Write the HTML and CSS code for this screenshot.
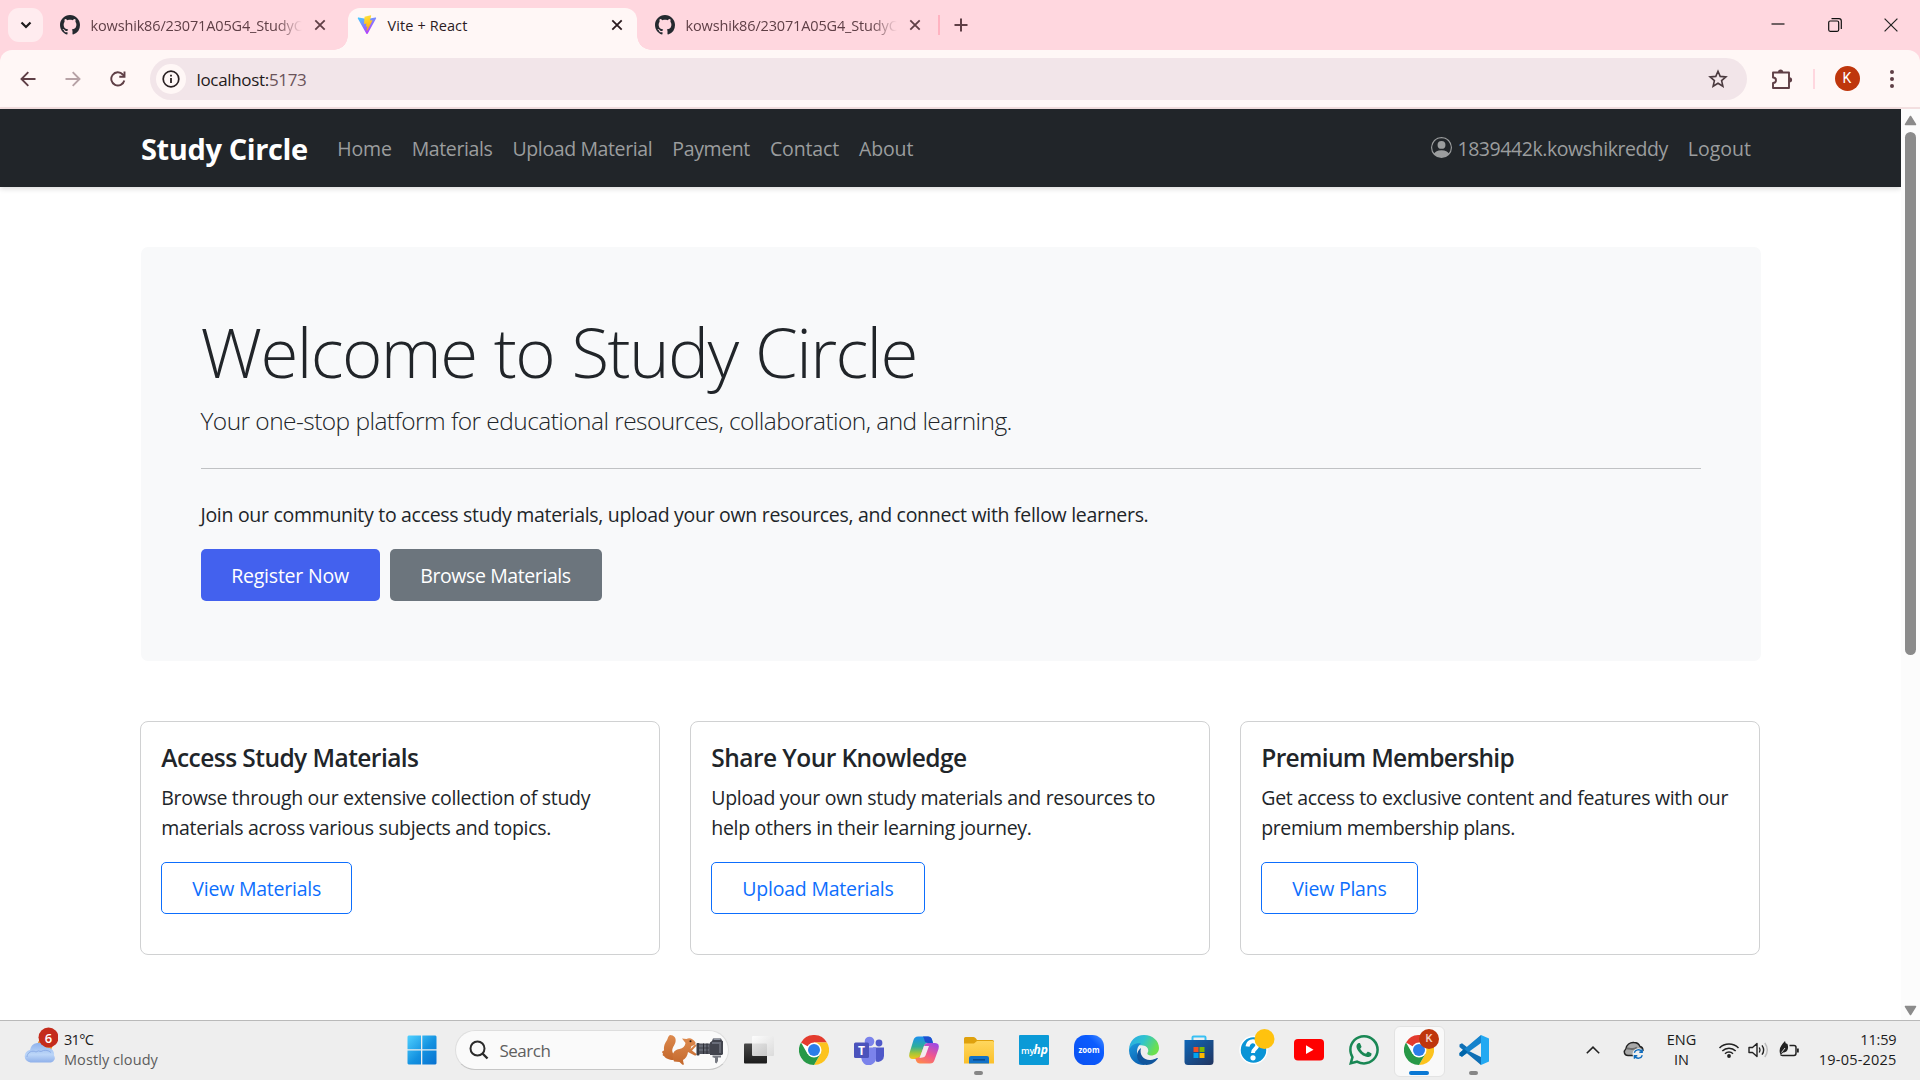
FILE: index.html
```html
<!DOCTYPE html>
<html lang="en">
<head>
<meta charset="utf-8">
<title>Vite + React</title>
<link rel="stylesheet" href="styles.css">
</head>
<body>
<svg class="defs" width="0" height="0">
  <defs>
    <linearGradient id="win" x1="0" y1="0" x2="1" y2="1"><stop offset="0" stop-color="#4fd0ff"/><stop offset=".55" stop-color="#1391e0"/><stop offset="1" stop-color="#0871d0"/></linearGradient>
    <linearGradient id="viteA" x1="0" y1="0" x2=".6" y2="1"><stop offset="0" stop-color="#41d1ff"/><stop offset="1" stop-color="#bd34fe"/></linearGradient>
    <linearGradient id="viteB" x1=".4" y1="0" x2=".6" y2="1"><stop offset="0" stop-color="#ffea83"/><stop offset=".1" stop-color="#ffdd35"/><stop offset="1" stop-color="#ffa800"/></linearGradient>
    <linearGradient id="cloud" x1="0" y1="0" x2="0" y2="1"><stop offset="0" stop-color="#8fb2ec"/><stop offset=".6" stop-color="#bcd6f8"/><stop offset="1" stop-color="#8fb0ea"/></linearGradient>
    <linearGradient id="folder" x1="0" y1="0" x2="0" y2="1"><stop offset="0" stop-color="#ffd75e"/><stop offset="1" stop-color="#fbc02b"/></linearGradient>
    <linearGradient id="copA" x1="0" y1="0" x2="0" y2="1"><stop offset="0" stop-color="#1b8ff0"/><stop offset=".45" stop-color="#2fae9a"/><stop offset=".75" stop-color="#a5c637"/><stop offset="1" stop-color="#f2c51c"/></linearGradient>
    <linearGradient id="copB" x1=".7" y1="0" x2=".2" y2="1"><stop offset="0" stop-color="#a24be0"/><stop offset=".5" stop-color="#f0568f"/><stop offset="1" stop-color="#ff8a4a"/></linearGradient>
    <linearGradient id="edgeTop" x1="0" y1="0" x2="1" y2=".4"><stop offset="0" stop-color="#2aa6e8"/><stop offset=".5" stop-color="#2fc3cf"/><stop offset="1" stop-color="#6be04f"/></linearGradient>
    <linearGradient id="edgeLow" x1="0" y1="0" x2=".4" y2="1"><stop offset="0" stop-color="#1d98dc"/><stop offset="1" stop-color="#0b64b4"/></linearGradient>
    <linearGradient id="store" x1="0" y1="0" x2="1" y2="1"><stop offset="0" stop-color="#0f67b8"/><stop offset="1" stop-color="#21345f"/></linearGradient>
    <linearGradient id="zoomBg" x1="1" y1="0" x2="0" y2="1"><stop offset="0" stop-color="#4a90ff"/><stop offset=".3" stop-color="#0b5cff"/><stop offset="1" stop-color="#0b50f0"/></linearGradient>
    <linearGradient id="dark" x1="0" y1="0" x2="0" y2="1"><stop offset="0" stop-color="#4a4a4a"/><stop offset="1" stop-color="#1b1b1b"/></linearGradient>
    <linearGradient id="lite" x1="0" y1="0" x2="1" y2="1"><stop offset="0" stop-color="#ffffff"/><stop offset="1" stop-color="#d8d8d8"/></linearGradient>
    <linearGradient id="fur" x1="0" y1="0" x2="0" y2="1"><stop offset="0" stop-color="#dd8a4e"/><stop offset="1" stop-color="#c4682c"/></linearGradient>
    <symbol id="github" viewBox="0 0 16 16"><path d="M8 0C3.58 0 0 3.58 0 8c0 3.54 2.29 6.53 5.47 7.59.4.07.55-.17.55-.38 0-.19-.01-.82-.01-1.49-2.01.37-2.53-.49-2.69-.94-.09-.23-.48-.94-.82-1.13-.28-.15-.68-.52-.01-.53.63-.01 1.08.58 1.23.82.72 1.21 1.87.87 2.33.66.07-.52.28-.87.51-1.07-1.78-.2-3.64-.89-3.64-3.95 0-.87.31-1.59.82-2.15-.08-.2-.36-1.02.08-2.12 0 0 .67-.21 2.2.82.64-.18 1.32-.27 2-.27s1.36.09 2 .27c1.53-1.04 2.2-.82 2.2-.82.44 1.1.16 1.92.08 2.12.51.56.82 1.27.82 2.15 0 3.07-1.87 3.75-3.65 3.95.29.25.54.73.54 1.48 0 1.07-.01 1.93-.01 2.2 0 .21.15.46.55.38A8.01 8.01 0 0 0 16 8c0-4.42-3.58-8-8-8z"/></symbol>
    <symbol id="close" viewBox="0 0 12 12"><path d="M1.3 1.3l9.4 9.4M10.7 1.3L1.3 10.7" fill="none" stroke="currentColor" stroke-width="1.8"/></symbol>
    <symbol id="chrome" viewBox="0 0 30 30"><circle cx="15" cy="15" r="15" fill="#fff"/><path d="M15 15L2 7.5A15 15 0 0 1 28 7.5H15z" fill="#e33b2e"/><path d="M15 7.5H28A15 15 0 0 1 15 30L21.5 18.8z" fill="#fcc31e"/><path d="M2 7.5A15 15 0 0 0 15 30L21.5 18.75 15 15 8.5 18.75z" fill="#279847"/><circle cx="15" cy="15" r="7.5" fill="#fff"/><circle cx="15" cy="15" r="6" fill="#2b7de9"/></symbol>
  </defs>
</svg>

<header class="tabstrip">
  <button class="tab-search"><svg width="12" height="8" viewBox="0 0 12 8"><path d="M1.5 1.500L6 6l4.500-4.500" fill="none" stroke="#1f1a1b" stroke-width="2.200"/></svg></button>
  <div class="tab tab-first">
    <svg class="favicon" width="20" height="20"><use href="#github"/></svg>
    <span class="tab-title fade">kowshik86/23071A05G4_StudyC</span>
    <svg class="tab-close" width="12" height="12"><use href="#close"/></svg>
  </div>
  <div class="tab tab-active">
    <svg class="favicon" width="20" height="20" viewBox="0 0 32 32"><path d="M30.500 5.500L17 29.800a1.200 1.200 0 0 1-2 0L1.300 5.500a1.200 1.200 0 0 1 1.200-1.700L16 6.200l13.300-2.400a1.200 1.200 0 0 1 1.200 1.700z" fill="url(#viteA)"/><path d="M22 .3L12.500 2.200a.6.6 0 0 0-.5.500l-.7 11a.6.6 0 0 0 .8.600l3-.7-.9 4.300a.6.6 0 0 0 .8.700l1.800-.5-1.400 6.700c-.1.500.5.700.8.300L24.500 9a.6.6 0 0 0-.6-.8l-3.200.6 2-8z" fill="url(#viteB)"/></svg>
    <span class="tab-title">Vite + React</span>
    <svg class="tab-close" width="12" height="12"><use href="#close"/></svg>
  </div>
  <div class="tab tab-last">
    <svg class="favicon" width="20" height="20"><use href="#github"/></svg>
    <span class="tab-title fade">kowshik86/23071A05G4_StudyC</span>
    <svg class="tab-close" width="12" height="12"><use href="#close"/></svg>
  </div>
  <i class="tab-sep"></i>
  <svg class="new-tab" width="14" height="14" viewBox="0 0 14 14"><path d="M7 .5v13M.5 7h13" stroke="#5f3f46" stroke-width="2"/></svg>
  <div class="window-controls">
    <svg width="14" height="14" viewBox="0 0 14 14"><path d="M.5 6h13" stroke="#111" stroke-width="1.200"/></svg>
    <svg width="14" height="14" viewBox="0 0 14 14"><rect x=".7" y="3" width="10" height="10.300" rx="1.500" fill="none" stroke="#111" stroke-width="1.200"/><path d="M3.500.7H11q2.300 0 2.300 2.300v8" fill="none" stroke="#111" stroke-width="1.200"/></svg>
    <svg width="14" height="14" viewBox="0 0 14 14"><path d="M.6.6l12.800 12.800M13.400.6L.6 13.400" stroke="#222" stroke-width="1.200"/></svg>
  </div>
</header>

<div class="toolbar">
  <div class="nav-buttons">
    <svg width="16" height="16" viewBox="0 0 16 16"><path d="M15.500 8H1.800M8.300 1.200L1.500 8l6.800 6.800" fill="none" stroke="#5f3f46" stroke-width="1.900"/></svg>
    <svg width="16" height="16" viewBox="0 0 16 16"><path d="M.5 8h13.700M7.700 1.200L14.500 8l-6.800 6.800" fill="none" stroke="#b7a2a6" stroke-width="1.900"/></svg>
    <svg width="16" height="16" viewBox="0 0 16 16"><path d="M14.300 9.500A6.600 6.600 0 1 1 12.800 3.500L14.300 5" fill="none" stroke="#5f3f46" stroke-width="1.900"/><path d="M14.500.5v5.200H9.300" fill="none" stroke="#5f3f46" stroke-width="1.900"/></svg>
  </div>
  <div class="omnibox">
    <span class="site-info"><svg width="18" height="18" viewBox="0 0 18 18"><circle cx="9" cy="9" r="7.800" fill="none" stroke="#2a2022" stroke-width="1.700"/><path d="M9 8v5M9 4.700v1.900" stroke="#2a2022" stroke-width="1.800"/></svg></span>
    <span class="url">localhost:<em>5173</em></span>
    <svg class="star" width="20" height="20" viewBox="0 0 20 20"><path d="M10 2.200l2.200 5.200 5.700.5-4.300 3.700 1.300 5.600L10 14.200l-4.900 3 1.300-5.600L2.100 7.900l5.700-.5z" fill="none" stroke="#4b3a3f" stroke-width="1.600"/></svg>
  </div>
  <svg class="extension" width="22" height="22" viewBox="0 0 22 22"><path d="M3.500 4.500h14.500v15.500h-16v-5c4 0 4-5.500 0-5.500v-5z" fill="none" stroke="#5f3f46" stroke-width="1.900" stroke-linejoin="round"/><path d="M7 4a2.600 2.600 0 0 1 5.200 0zM18.500 9.200a2.600 2.600 0 0 1 0 5.200z" fill="#5f3f46"/></svg>
  <i class="bar-sep"></i>
  <span class="profile">K</span>
  <svg class="menu" width="6" height="20" viewBox="0 0 6 20"><circle cx="3" cy="3" r="2" fill="#5f3f46"/><circle cx="3" cy="10" r="2" fill="#5f3f46"/><circle cx="3" cy="17" r="2" fill="#5f3f46"/></svg>
</div>

<div class="viewport">
  <div class="page">
    <nav class="navbar">
      <a class="brand">Study Circle</a>
      <a class="link-home">Home</a>
      <a>Materials</a>
      <a>Upload Material</a>
      <a>Payment</a>
      <a class="link-wide">Contact</a>
      <a class="link-wide">About</a>
      <span class="account">
        <svg width="21" height="21" viewBox="0 0 16 16" fill="currentColor"><path d="M11 6a3 3 0 1 1-6 0 3 3 0 0 1 6 0"/><path fill-rule="evenodd" d="M0 8a8 8 0 1 1 16 0A8 8 0 0 1 0 8m8-7a7 7 0 0 0-5.468 11.370C3.242 11.226 4.805 10 8 10s4.757 1.225 5.468 2.370A7 7 0 0 0 8 1"/></svg>
        <a class="user">1839442k.kowshikreddy</a>
        <a class="logout">Logout</a>
      </span>
    </nav>

    <main class="container">
      <section class="hero">
        <h1>Welcome to Study Circle</h1>
        <p class="lead">Your one-stop platform for educational resources, collaboration, and learning.</p>
        <hr>
        <p class="join">Join our community to access study materials, upload your own resources, and connect with fellow learners.</p>
        <div class="actions">
          <a class="btn btn-primary">Register Now</a>
          <a class="btn btn-secondary">Browse Materials</a>
        </div>
      </section>

      <section class="cards">
        <article class="card">
          <h5>Access Study Materials</h5>
          <p>Browse through our extensive collection of study<br>materials across various subjects and topics.</p>
          <a class="btn btn-outline">View Materials</a>
        </article>
        <article class="card">
          <h5>Share Your Knowledge</h5>
          <p>Upload your own study materials and resources to<br>help others in their learning journey.</p>
          <a class="btn btn-outline">Upload Materials</a>
        </article>
        <article class="card">
          <h5 class="tight">Premium Membership</h5>
          <p>Get access to exclusive content and features with our<br><span class="tight-line">premium membership plans.</span></p>
          <a class="btn btn-outline">View Plans</a>
        </article>
      </section>
    </main>
  </div>
  <div class="scrollbar">
    <svg width="13" height="11" viewBox="0 0 13 11"><path d="M6.500 1.500L11.500 9.500h-10z" fill="#8b8b8b" stroke="#8b8b8b" stroke-width="1.500" stroke-linejoin="round"/></svg>
    <i class="thumb"></i>
    <svg class="down" width="13" height="11" viewBox="0 0 13 11"><path d="M6.500 9.500L1.500 1.500h10z" fill="#8b8b8b" stroke="#8b8b8b" stroke-width="1.500" stroke-linejoin="round"/></svg>
  </div>
</div>

<footer class="taskbar">
  <div class="weather">
    <svg width="34" height="38" viewBox="0 0 34 38"><circle cx="21" cy="18" r="7.500" fill="#f08a1c"/><path d="M6.500 35.500a6.300 6.300 0 0 1-.5-12.500 8.500 8.500 0 0 1 16-2.500 7 7 0 0 1 8 8 4.500 4.500 0 0 1-3 7z" fill="url(#cloud)"/><path d="M3 30a6 6 0 0 1 9-5q2-2 5-.5 5-3 10 1" fill="none" stroke="#7e9fdf" stroke-width="1" opacity=".7"/><circle cx="24.500" cy="10.500" r="10" fill="#c42b1c"/><text x="24.500" y="15.500" text-anchor="middle" class="badge-text">6</text></svg>
    <div class="weather-text"><b>31°C</b><span>Mostly cloudy</span></div>
  </div>
  <div class="task"><svg width="30" height="30" viewBox="0 0 30 30"><path d="M1.500.5H14v13.700H.5V1.500zM15.300.5H28.500l1 1v12.700H15.300zM.5 15.500H14v14H1.500l-1-1zM15.300 15.500H29.500v13l-1 1H15.300z" fill="url(#win)"/></svg></div>
  <div class="search">
    <svg width="20" height="20" viewBox="0 0 20 20"><circle cx="8.500" cy="8.500" r="7" fill="none" stroke="#2b2b2b" stroke-width="2"/><path d="M13.500 13.500l5 5" stroke="#2b2b2b" stroke-width="2.400"/></svg>
    <span class="search-label">Search</span>
    <svg class="squirrel" width="64" height="32" viewBox="0 0 64 32">
      <path d="M9 1C13 1 15.500 4 14.500 8c-.8 3.500-4 6-3 10 .5 2.500 2.500 4 3 6l-2 2C8 26 4 24 3 22c-1.500 0-1.500-1.500-1-2.500C.5 18.500 1 17 3 16.500 2.500 9.500 5.500 8 6.500 5 7 3 7.500 2 9 1z" fill="url(#fur)"/>
      <path d="M11.500 23c0-5 3-7.500 7-8 3.500-.5 5.500-3 6-6L21 4.500l4.500.5c3-2 7 0 9 3.500.3 2-1.500 3-4 3.500l-1 3 4.500-4.500c1.200-.3 2 .8 1 1.700L31 16.500l4.500 3.500c.3 1.400-1 1.800-2.300 1.200L27 18c-.5 4-2.500 6.500-5 8l.5 3c1 1.500 0 2.300-1.300 1.600L18.500 28 13 27.500z" fill="url(#fur)"/>
      <circle cx="29.500" cy="7.300" r="1" fill="#2a1a12"/>
      <rect x="35.500" y="9" width="3" height="12.500" rx="1" fill="#383b44"/><path d="M38 9.500h11v10.500H38z" fill="#50535d"/><path d="M38 12h10M38 16h10" stroke="#7b808c" stroke-width="1"/><path d="M42.500 9.500V20M46 9.500V20" stroke="#2d2f37" stroke-width="1"/>
      <path d="M49 8.500l2-1.500 1-2.500h8l1 2 1 .8V20l-1 1H49z" fill="#43454e"/><path d="M52.500 5.300h7M51 9h9" stroke="#9096a3" stroke-width="1.200"/><path d="M59 10v9" stroke="#70747f" stroke-width="1.500"/>
      <path d="M51.500 21.500h8.500v2h-3v3.500l-1.500 2.500-1.500-1V24l-2.500-.7z" fill="#777a82"/>
    </svg>
  </div>
  <div class="task"><svg width="32" height="30" viewBox="0 0 32 30"><rect x="1" y="8.500" width="23" height="20" rx="1" fill="url(#dark)"/><rect x="9" y="1" width="22" height="20" rx="1" fill="url(#lite)" fill-opacity=".88"/></svg></div>
  <div class="task"><svg width="30" height="30"><use href="#chrome"/></svg></div>
  <div class="task"><svg width="32" height="30" viewBox="0 0 32 30"><circle cx="26" cy="8" r="3.400" fill="#5059c9"/><path d="M20 12.500h11v8.500a6 6 0 0 1-8 5.500z" fill="#5059c9"/><circle cx="16.500" cy="6.500" r="4.800" fill="#7b83eb"/><path d="M8 12.500h15v10a7.300 7.300 0 0 1-14.600 1z" fill="#7b83eb"/><rect x="1" y="7.500" width="15" height="15.500" rx="1.500" fill="#4b53bc"/><text x="8.500" y="19.500" text-anchor="middle" class="teams-text">T</text></svg></div>
  <div class="task"><svg width="32" height="30" viewBox="0 0 32 30"><path d="M10 1.500h10q3 0 4 3l1 3.500h-5q-3 0-4 3l-3 9q-1.500 4-5 4H5q-5 0-3.500-6l4-13q1-3.500 4.500-3.500z" fill="url(#copA)"/><path d="M15 1.500h5q3 0 4 3l1 3.500h-5l-3-1q-1-4.500-2-5.500z" fill="#1f4fd0"/><path d="M22 28.500H12q-3 0-4-3l-.8-2.500q4 .5 5.800-3l3-9q1-3 4-3h7q5 0 3.500 6l-4 11q-1 3.500-4.500 3.500z" fill="url(#copB)"/><path d="M16 11h5l-3.500 9.500q-.8 2-3 2l-3 .5z" fill="#f4e9ee"/></svg></div>
  <div class="task"><svg width="30" height="30" viewBox="0 0 30 30"><path d="M0 3.500q0-1.500 1.500-1.500h8q1.500 0 2.500 1.500L13 5h15.500Q30 5 30 6.500V14H0z" fill="#dfa10d"/><path d="M0 8.500h10L13 6h15.500Q30 6 30 7.500v21H0z" fill="url(#folder)"/><path d="M5 28.500V23q0-2 2-2h16q2 0 2 2v5.500z" fill="#1272c8"/><path d="M9 24.800h12" stroke="#0a4a8c" stroke-width="1.500"/></svg><i class="dot"></i></div>
  <div class="task"><svg width="30" height="30" viewBox="0 0 30 30"><rect width="30" height="30" rx="1" fill="#0a9ad7"/><text x="2" y="18.500" class="my-text">my</text><text x="14.500" y="19" class="hp-text">hp</text></svg></div>
  <div class="task"><svg width="30" height="30" viewBox="0 0 30 30"><rect width="30" height="30" rx="11.500" fill="url(#zoomBg)"/><text x="15" y="17.500" text-anchor="middle" class="zoom-text" textLength="21" lengthAdjust="spacingAndGlyphs">zoom</text></svg></div>
  <div class="task"><svg width="30" height="30" viewBox="0 0 30 30"><path d="M.2 17C-1 7 6 0 15 0c9 0 15 6 15 13 0 5-4 7.500-8 7.500-3 0-4-1.500-3.500-2.500 2-3 0-7-4.500-7.500C7 9.500 2 12 .2 17z" fill="url(#edgeTop)"/><path d="M.1 15.500C1.500 10 7 7.500 12 8.500c-3 2-4 5-4 8.500 0 6 4 11 9 12.800C8 31 0 25 .1 15.500z" fill="url(#edgeLow)"/><path d="M12 13c-2 7 3 12.500 9.500 12 2.500-.2 4.500-1 6.500-2 .8-.3 1 .3.700.8C26 27.500 22 30 17.500 30 10 29.500 6 22 9 16.500c.8-1.600 1.800-2.700 3-3.500z" fill="#10559c"/></svg></div>
  <div class="task"><svg width="30" height="30" viewBox="0 0 30 30"><path d="M8.500 6V2.500q0-1 1-1h11q1 0 1 1V6" fill="none" stroke="#38c0f3" stroke-width="2"/><path d="M.5 5h29v21.500q0 3.500-3.500 3.500H4Q.5 30 .5 26.500z" fill="url(#store)"/><path d="M9.500 12H14.500v5H9.500z" fill="#f25022"/><path d="M15.500 12h5v5h-5z" fill="#7fba00"/><path d="M9.500 18H14.500v5H9.500z" fill="#00a4ef"/><path d="M15.500 18h5v5h-5z" fill="#ffb900"/></svg></div>
  <div class="task"><svg class="help" width="36" height="36" viewBox="0 0 36 36"><circle cx="14.500" cy="21" r="13.500" fill="#0a94d6" stroke="#fff" stroke-width="1.500"/><path d="M8.500 17.500c1-5.500 5.500-6 8-4.500 3 2 2 5-.5 7-1.500 1.200-2 2-2 4" fill="none" stroke="#fff" stroke-width="4"/><circle cx="14" cy="28.800" r="2.600" fill="#fff"/><circle cx="25.500" cy="10" r="10" fill="#ffc20e"/></svg></div>
  <div class="task"><svg width="30" height="30" viewBox="0 0 30 30"><rect y="4" width="30" height="21.500" rx="4" fill="#f00"/><path d="M12 10.300v8.800l7.500-4.400z" fill="#fff"/></svg></div>
  <div class="task"><svg width="30" height="30" viewBox="0 0 16 16" fill="#198754"><path d="M13.601 2.326A7.850 7.850 0 0 0 7.994 0C3.627 0 .068 3.558.064 7.926c0 1.399.366 2.760 1.057 3.965L0 16l4.204-1.102a7.900 7.900 0 0 0 3.790.965h.004c4.368 0 7.926-3.558 7.930-7.930A7.900 7.900 0 0 0 13.600 2.326zM7.994 14.521a6.600 6.600 0 0 1-3.356-.92l-.240-.144-2.494.654.666-2.433-.156-.251a6.560 6.560 0 0 1-1.007-3.505c0-3.626 2.957-6.584 6.591-6.584a6.560 6.560 0 0 1 4.660 1.931 6.560 6.560 0 0 1 1.928 4.660c-.004 3.639-2.961 6.592-6.592 6.592m3.615-4.934c-.197-.099-1.170-.578-1.353-.646-.182-.065-.315-.099-.445.099-.133.197-.513.646-.627.775-.114.133-.232.148-.430.050-.197-.100-.836-.308-1.592-.985-.590-.525-.985-1.175-1.103-1.372-.114-.198-.011-.304.088-.403.087-.088.197-.232.296-.346.100-.114.133-.198.198-.330.065-.134.034-.248-.015-.347-.050-.099-.445-1.076-.612-1.470-.160-.389-.323-.335-.445-.340-.114-.007-.247-.007-.380-.007a.730.730 0 0 0-.529.247c-.182.198-.691.677-.691 1.654s.710 1.916.810 2.049c.098.133 1.394 2.132 3.383 2.992.470.205.840.326 1.129.418.475.152.904.129 1.246.080.380-.058 1.171-.480 1.338-.943.164-.464.164-.860.114-.943-.049-.084-.182-.133-.380-.232"/></svg></div>
  <div class="task task-active"><svg width="30" height="30"><use href="#chrome"/></svg><b class="k-badge">K</b><i class="dot dot-active"></i></div>
  <div class="task"><svg width="30" height="30" viewBox="0 0 30 30"><path d="M22 0L8.500 12.500 3 8.300 .5 9.600V12L22 30V22L8 15z" fill="#0f6fb5"/><path d="M22 0v8L3 21.700.5 20.400V18L22 0z" fill="#1583cc"/><path d="M3 21.700L.5 20.400V18L5 14l4 3z" fill="#0065a9"/><path d="M22 0l8 3.500v23L22 30z" fill="#23a9f2"/></svg><i class="dot"></i></div>
  <div class="tray">
    <svg class="chev" width="14" height="8" viewBox="0 0 14 8"><path d="M.8 7.200L7 1.200l6.200 6" fill="none" stroke="#222" stroke-width="1.600"/></svg>
    <svg class="onedrive" width="22" height="20" viewBox="0 0 22 20"><path d="M5 15.500C1 15.500.3 11 2.800 9 3.300 5 7 2 11 2.500c3 0 5 1.500 6 4 2 .5 3 2 3 4l-5 5z" fill="#a8a8a8" stroke="#222" stroke-width="1.400"/><path d="M4 8.500C8 8 9 11 14 7.500" fill="none" stroke="#6d6d6d" stroke-width="2"/><circle cx="15.300" cy="14" r="5.800" fill="#eee"/><path d="M11.300 12.800a4.200 4.200 0 0 1 7.400-1.300M19.300 15.200a4.200 4.200 0 0 1-7.400 1.300M19.200 9.300v2.900h-2.900M11.400 18.700v-2.900h2.900" fill="none" stroke="#0f6cbd" stroke-width="1.400"/></svg>
    <div class="lang"><span>ENG</span><span>IN</span></div>
    <svg class="wifi" width="22" height="18" viewBox="0 0 22 18"><path d="M1.500 7a13.500 13.500 0 0 1 19 0M4.300 10a9.500 9.500 0 0 1 13.400 0M7 12.700a5.700 5.700 0 0 1 8 0" fill="none" stroke="#222" stroke-width="1.500"/><circle cx="11" cy="15" r="1.900" fill="#222"/></svg>
    <svg class="volume" width="21" height="18" viewBox="0 0 21 18"><path d="M1 6.500h3.500L9 2.500v13L4.500 11.500H1z" fill="none" stroke="#222" stroke-width="1.400" stroke-linejoin="round"/><path d="M11.300 6.500q1.500 2.500 0 5M14 4.300q3.300 4.700 0 9.400" fill="none" stroke="#222" stroke-width="1.400"/><path d="M16.800 2q5 7 0 14" fill="none" stroke="#bbb" stroke-width="1.400"/></svg>
    <svg class="battery" width="21" height="18" viewBox="0 0 21 18"><path d="M10.500 4.500H15q2 0 2 2V12q0 2.500-2 2.500H3.500q-1.500 0-2-1" fill="none" stroke="#222" stroke-width="1.500"/><path d="M18 7.500h1.800v4H18z" fill="#222"/><path d="M1 12.500C-.5 7 2.500 4 6 0l.7 2.200L8.500 3c1.500 4.500 0 8.500-4.500 8.500L2 13.500z" fill="#222"/><path d="M2.500 11.500L6 7" stroke="#eee" stroke-width=".9"/></svg>
    <div class="clock"><span>11:59</span><span class="date">19-05-2025</span></div>
  </div>
</footer>
</body>
</html>
```
FILE: styles.css
```css
* { box-sizing: border-box; }
body {
  margin: 0;
  width: 1920px;
  height: 1080px;
  overflow: hidden;
  display: flex;
  flex-direction: column;
  font-family: "Open Sans", "Noto Sans", sans-serif;
  color: #212529;
  background: #ffd7df;
}
svg { display: block; flex: none; }
i, em { font-style: normal; }
.defs { position: absolute; }

/* tab strip */
.tabstrip {
  height: 50px;
  flex: none;
  display: flex;
  align-items: center;
  font-size: 14.5px;
  color: #5f3f46;
}
.tab-search {
  width: 35px;
  height: 34px;
  margin: 0 0 0 8px;
  padding: 0;
  border: 0;
  border-radius: 11px;
  background: #ffecef;
  display: flex;
  align-items: center;
  justify-content: center;
}
.tab { display: flex; align-items: center; height: 50px; }
.tab-first { width: 305px; padding-left: 17px; }
.tab-last { width: 300px; padding-left: 18px; }
.favicon { margin-right: 10.5px; fill: #24292f; }
.tab-title { flex: none; width: 214px; padding-top: 1px; white-space: nowrap; line-height: 20px; letter-spacing: .1px; }
.fade { letter-spacing: -.15px; -webkit-mask-image: linear-gradient(90deg, #000 185px, transparent 211px); mask-image: linear-gradient(90deg, #000 185px, transparent 211px); }
.tab-close { margin-left: 9px; }
.tab-active {
  position: relative;
  width: 289px;
  height: 42px;
  margin-top: 8px;
  padding: 0 0 8px 9px;
  border-radius: 12px 12px 0 0;
  background: #fff7f6;
  color: #2b1b1f;
}
.tab-active::before, .tab-active::after {
  content: "";
  position: absolute;
  bottom: 0;
  width: 14px;
  height: 14px;
}
.tab-active::before { left: -14px; background: radial-gradient(circle at 0 0, transparent 13.5px, #fff7f6 14px); }
.tab-active::after { right: -14px; background: radial-gradient(circle at 100% 0, transparent 13.5px, #fff7f6 14px); }
.tab-active .tab-title { width: 220px; }
.tab-active .tab-close { margin-left: 3.5px; }
.tab-sep { width: 2px; height: 20px; margin-left: 1px; background: #ffb3c1; }
.new-tab { margin-left: 13.5px; }
.window-controls { display: flex; gap: 42.5px; margin-left: auto; margin-right: 22px; }

/* toolbar */
.toolbar {
  height: 59px;
  flex: none;
  display: flex;
  align-items: center;
  background: #fff7f6;
  border-bottom: 2px solid #f3dfe0;
  border-radius: 12px 12px 0 0;
}
.nav-buttons { display: flex; gap: 29px; margin-left: 19.5px; }
.omnibox {
  display: flex;
  align-items: center;
  width: 1597px;
  height: 42px;
  margin-left: 24.5px;
  margin-top: 1px;
  padding: 0 19.5px 0 6px;
  border-radius: 21px;
  background: #f2e5e9;
}
.site-info { width: 30px; height: 30px; border-radius: 50%; background: #fff7f6; display: flex; align-items: center; justify-content: center; }
.url { margin-left: 10.5px; padding-top: 1px; font-size: 17px; line-height: 24px; letter-spacing: -.33px; color: #1f1a1b; }
.url em { color: #6a5359; }
.star { margin-left: auto; }
.extension { margin-left: 23.5px; }
.bar-sep { width: 2px; height: 20px; margin-left: 20px; background: #ffd7df; }
.profile { width: 25px; height: 25px; margin-left: 20px; border-radius: 50%; background: #bf360c; color: #fff; font: 14px/25px Roboto, sans-serif; text-align: center; }
.menu { margin-left: 29.5px; }

/* page */
.viewport { display: flex; height: 911px; flex: none; }
.page { width: 1901px; background: #fff; }
.navbar {
  height: 78px;
  display: flex;
  align-items: center;
  padding: 0 140px 0 141px;
  background: #212529;
  color: #9b9d9e;
  font-size: 19.5px;
  letter-spacing: -.38px;
  box-shadow: 0 2px 5px rgba(0, 0, 0, .14);
  white-space: nowrap;
}
.navbar a { margin-right: 20px; }
.navbar .link-home { letter-spacing: -.2px; }
.navbar .link-wide { letter-spacing: -.14px; }
.navbar .brand { margin-right: 29.5px; font-size: 29px; font-weight: 700; letter-spacing: -.38px; color: #fff; }
.account { display: flex; align-items: center; margin-left: auto; }
.account svg { margin: -1px 5px 0 0; }
.navbar .user { letter-spacing: -.43px; }
.navbar .logout { margin-right: 10px; letter-spacing: 0; }
.container { width: 1620px; margin: 60px 0 0 140.5px; }
.hero { height: 414px; padding: 60px; border-radius: 7px; background: #f8f9fa; }
.hero h1 { margin: 2px 0 0; font-size: 69px; font-weight: 300; line-height: 84px; letter-spacing: -1.6px; word-spacing: 1px; white-space: nowrap; }
.lead { margin: 9px 0 0; font-size: 24.5px; font-weight: 300; line-height: 38px; letter-spacing: -.56px; white-space: nowrap; }
hr { margin: 28px 0 0; border: 0; border-top: 1px solid #c0c2c4; }
.join { margin: 31px 0 0; font-size: 19.5px; line-height: 30px; letter-spacing: -.3px; white-space: nowrap; }
.actions { display: flex; gap: 10px; margin-top: 19px; }
.btn { display: flex; align-items: center; justify-content: center; height: 52px; border-radius: 5px; font-size: 19.5px; letter-spacing: -.22px; white-space: nowrap; }
.btn-primary { width: 179px; background: #4361ee; color: #fff; }
.btn-secondary { width: 212px; background: #6c757d; color: #fff; letter-spacing: -.4px; }
.cards { display: grid; grid-template-columns: repeat(3, 520px); column-gap: 30px; margin: 60px 0 0 -.2px; }
.card { height: 234px; padding: 20px; border: 1px solid #d0d1d2; border-radius: 8px; }
.card h5 { margin: 1px 0 0; font-size: 24.5px; font-weight: 600; line-height: 30px; letter-spacing: -.55px; white-space: nowrap; }
.card .tight { letter-spacing: -.67px; }
.card p { margin: 10px 0 0; font-size: 19.5px; line-height: 30px; letter-spacing: -.31px; white-space: nowrap; }
.tight-line { letter-spacing: -.42px; }
.btn-outline { display: inline-flex; margin-top: 19px; padding: 0 30px; border: 1px solid #0d6efd; color: #0d6efd; }
.scrollbar { width: 19px; display: flex; flex-direction: column; align-items: center; background: #fcfcfc; padding: 6px 0 4px; }
.thumb { width: 11px; height: 523px; margin-top: 6px; border-radius: 6px; background: #8b8b8b; }
.down { margin-top: auto; }

/* taskbar */
.taskbar { height: 60px; flex: none; display: flex; align-items: center; background: #eee; border-top: 1px solid #b9b9b9; font-size: 14.5px; }
.weather { width: 394.5px; height: 59px; display: flex; padding-left: 24px; }
.weather svg { margin-top: 6px; }
.weather-text { display: flex; flex-direction: column; margin: 9px 0 0 6px; line-height: 20px; align-items: flex-start; color: #5c5c5c; letter-spacing: .08px; }
.weather-text b { font-weight: 400; color: #1b1b1b; letter-spacing: -.7px; }
.badge-text { font: 600 13px "Open Sans", sans-serif; fill: #fff; }
.task { position: relative; width: 55px; height: 59px; padding-bottom: 1px; display: flex; align-items: center; justify-content: center; }
.search { width: 274px; height: 40px; margin: -1px 2.5px 0 5px; padding: 0 3px 0 13px; display: flex; align-items: center; border: 1px solid #dedede; border-bottom-color: #c6c6c6; border-radius: 20px; background: #fafafa; font-size: 17px; letter-spacing: -.5px; color: #5f5f5f; }
.search-label { margin-left: 11px; }
.squirrel { margin-left: auto; }
.dot { position: absolute; left: 23px; bottom: 5px; width: 9px; height: 4px; border-radius: 2px; background: #868686; }
.dot-active { left: 17.5px; width: 20px; background: #0a78d4; }
.task-active::before { content: ""; position: absolute; left: 3px; top: 5px; width: 49px; height: 49px; border: 1px solid #e3e3e3; border-radius: 6px; background: #f9f9f9; }
.task-active svg { position: relative; }
.k-badge { position: absolute; left: 28px; top: 8px; width: 20px; height: 20px; border-radius: 50%; background: #bf360c; color: #f3cfc3; font: 500 11px/20px Roboto, sans-serif; text-align: center; }
.help { margin: -6px 0 0 6px; }
.teams-text { font: 700 12px "Open Sans", sans-serif; fill: #fff; }
.my-text { font: 600 9px "Open Sans", sans-serif; fill: #fff; }
.hp-text { font: italic 700 12px "Open Sans", sans-serif; fill: #fff; }
.zoom-text { font: 700 8px "Open Sans", sans-serif; fill: #fff; }
.tray { display: flex; align-items: center; margin-left: 84.5px; margin-top: -1px; color: #1b1b1b; }
.onedrive { margin-left: 23px; }
.lang { width: 40px; margin-left: 17px; display: flex; flex-direction: column; align-items: center; line-height: 20px; }
.wifi { margin-left: 16px; }
.volume { margin-left: 8px; }
.battery { margin-left: 10px; }
.clock { width: 97px; display: flex; flex-direction: column; align-items: flex-end; line-height: 20px; letter-spacing: -.15px; }
.date { letter-spacing: .2px; }
```
